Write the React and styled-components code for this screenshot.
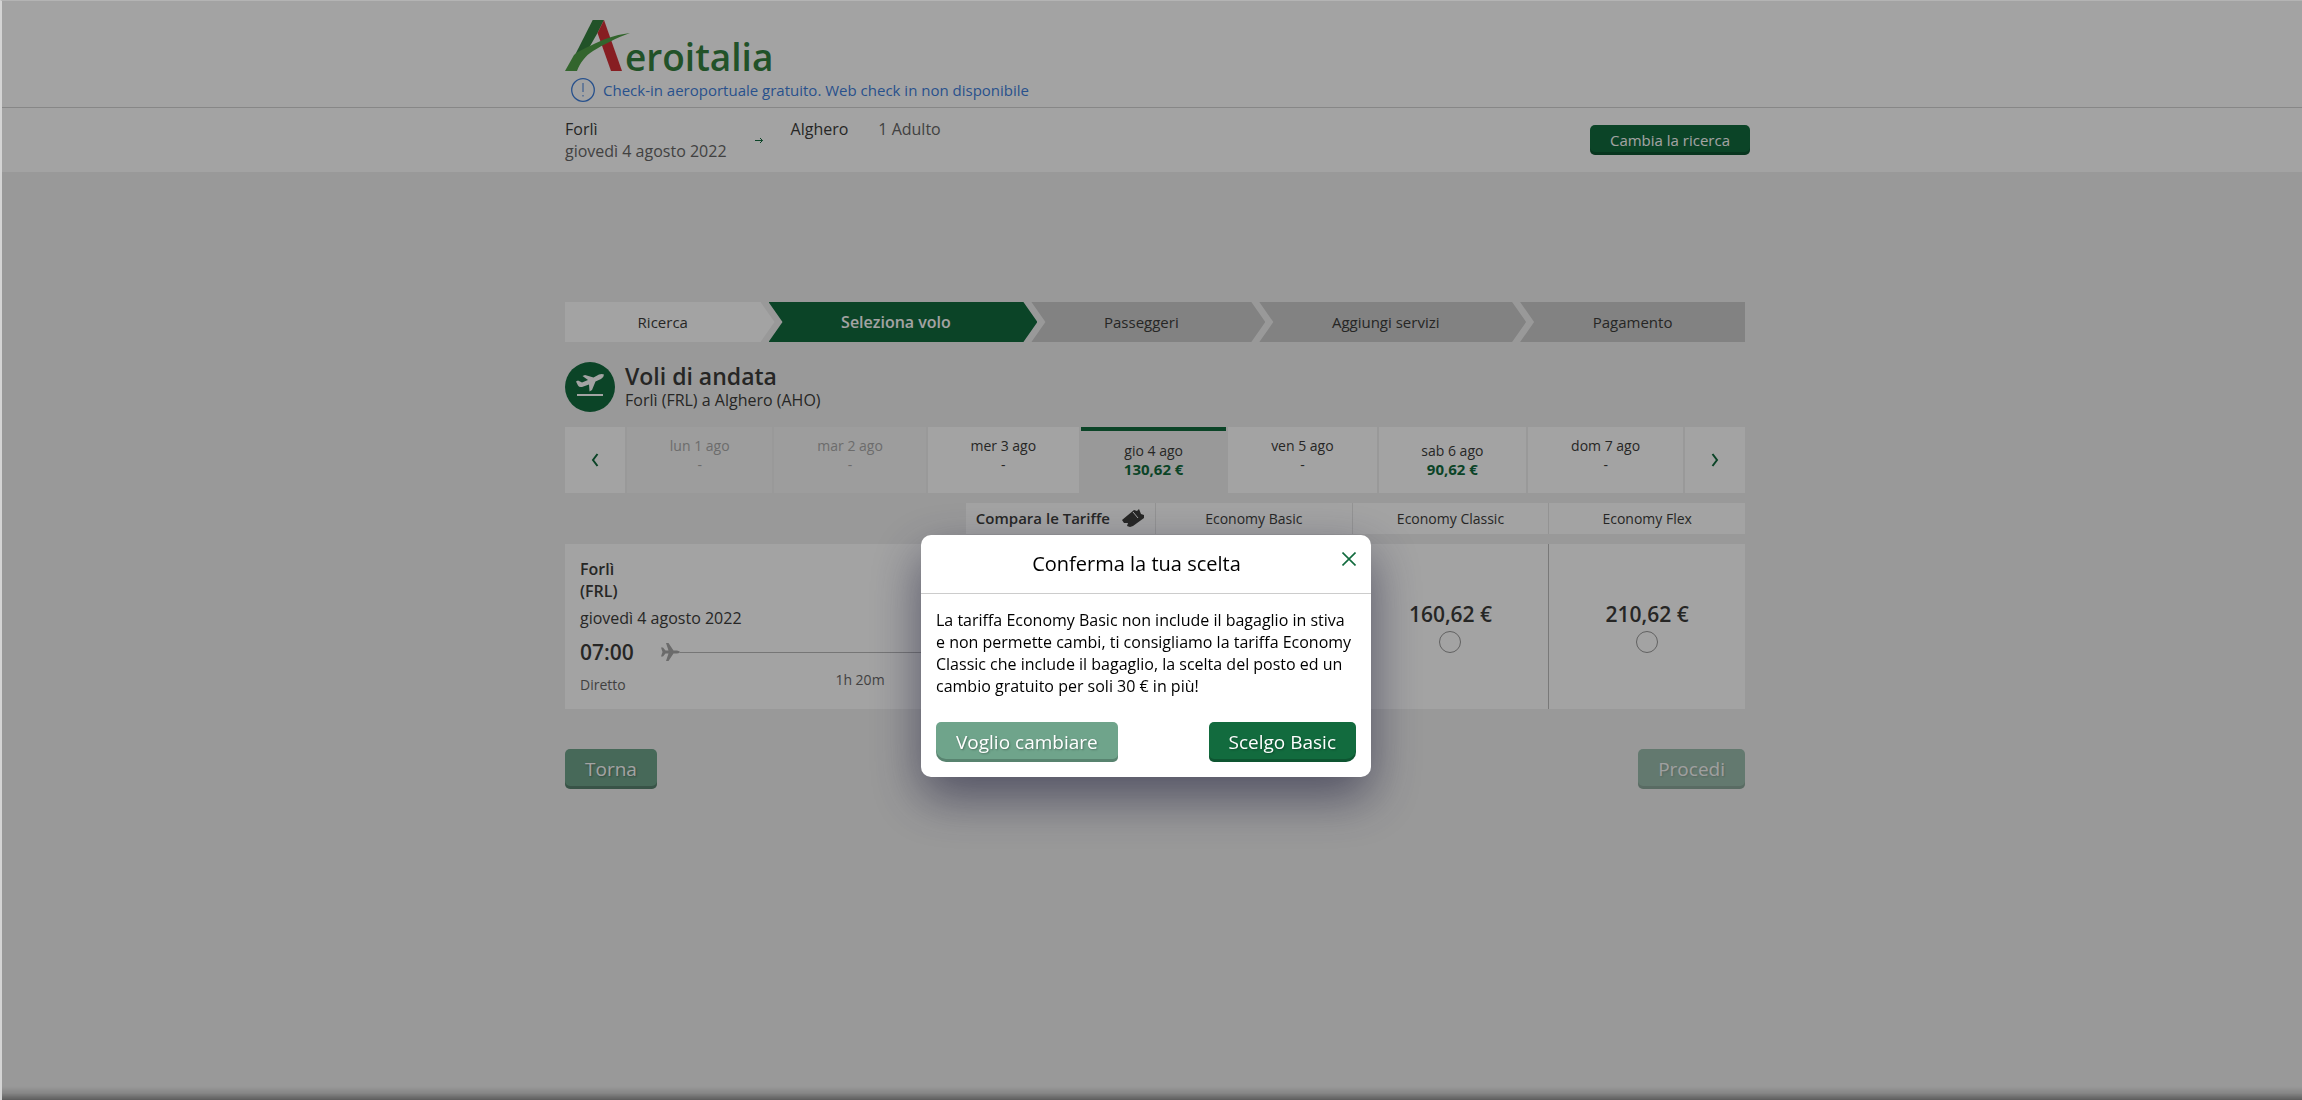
import React from "react";
import styled, { createGlobalStyle, css } from "styled-components";

const green = "#126b3e";
const ink = "#3c3c3a";

const GlobalStyle = createGlobalStyle`
  *, *::before, *::after { box-sizing: border-box; }
  body {
    margin: 0;
    background: #f0f0f0;
    color: ${ink};
    font: 16px/22px "Open Sans", "Noto Sans", sans-serif;
  }
  h1, h2, p, ol { margin: 0; padding: 0; }
  button, input { font-family: inherit; }
`;

const Page = styled.div`
  min-height: 100vh;
  padding-left: 8px;
`;

const Header = styled.header`
  margin-left: -8px;
  padding-left: 8px;
  background: #fff;
`;

const HeaderInner = styled.div`
  max-width: 1190px;
  margin: 0 auto;
  padding-left: 5px;
`;

const Brand = styled(HeaderInner)`
  height: 107px;
  padding-top: 20px;
`;

const Rule = styled.div`
  height: 1px;
  margin-left: -8px;
  background: #d4d4d4;
`;

const LogoSvg = styled.svg`
  display: block;
  overflow: visible;
`;

const Notice = styled.p`
  display: flex;
  align-items: center;
  gap: 8px;
  padding: 6px 6px 0;
  color: #3f7fdc;
  font-size: 15px;
`;

const SearchBar = styled(HeaderInner)`
  display: flex;
  align-items: flex-start;
  height: 64px;
  padding-top: 10px;
`;

const Muted = styled.span`
  color: #676767;
`;

const Place = styled.div`
  display: flex;
  flex-direction: column;
`;

const Arrow = styled.svg`
  margin: 19px 27px 0 28px;
`;

const Passengers = styled(Muted)`
  margin-left: 30px;
`;

const raised = css`
  border: 0;
  border-radius: 5px;
  color: #fff;
  cursor: pointer;
  box-shadow: inset 0 -3px 0 rgba(0, 0, 0, 0.2);
`;

const SmallButton = styled.button`
  ${raised}
  margin: 7px 0 0 auto;
  height: 30px;
  padding: 0 20px 1px;
  background: ${green};
  font-size: 15px;
`;

const Button = styled.button`
  ${raised}
  height: 40px;
  padding: 0 20px 1px;
  font-size: 19px;
  background: ${(p) => (p.$soft ? "#6fa48b" : green)};
  text-shadow: 1px 1px 2px rgba(0, 0, 0, 0.3);
  &:disabled { opacity: 0.65; }
`;

const Main = styled.main`
  max-width: 1180px;
  margin: 130px auto 0;
`;

const Steps = styled.ol`
  display: flex;
  height: 40px;
  list-style: none;
`;

const stepFill = { done: "#fff", current: green, next: "#cbcbcb" };

const Step = styled.li`
  flex: 1 1 auto;
  padding: 0 80px 0 66px;
  text-align: center;
  font-size: 15px;
  line-height: 40px;
  background: ${(p) => stepFill[p.$state]};
  clip-path: polygon(0 0, calc(100% - 14px) 0, 100% 50%, calc(100% - 14px) 100%, 0 100%, 14px 50%);
  & + & { margin-left: -6px; }
  &:first-child {
    clip-path: polygon(0 0, calc(100% - 14px) 0, 100% 50%, calc(100% - 14px) 100%, 0 100%);
  }
  &:last-child {
    padding-right: 66px;
    clip-path: polygon(0 0, 100% 0, 100% 100%, 0 100%, 14px 50%);
  }
  ${(p) => p.$state === "current" && css`
    color: #fff;
    font-size: 16px;
    font-weight: 600;
  `}
`;

const Heading = styled.div`
  display: flex;
  align-items: center;
  gap: 10px;
  margin: 20px 0 15px;
`;

const Badge = styled.span`
  display: grid;
  place-items: center;
  width: 50px;
  height: 50px;
  border-radius: 50%;
  background: ${green};
`;

const Title = styled.h1`
  font-size: 23px;
  line-height: 26px;
  font-weight: 600;
`;

const Days = styled.div`
  display: flex;
  gap: 2px;
  height: 66px;
`;

const DayArrow = styled.button`
  flex: 0 0 60px;
  display: grid;
  place-items: center;
  padding: 0;
  border: 0;
  background: #fff;
  cursor: pointer;
`;

const Day = styled.button`
  flex: 1 1 auto;
  display: flex;
  flex-direction: column;
  align-items: center;
  justify-content: center;
  padding: 0 20px ${(p) => (p.$price ? 0 : 10)}px;
  border: 0;
  background: ${(p) => (p.$selected ? "transparent" : "#fff")};
  box-shadow: ${(p) => (p.$selected ? `inset 0 4px 0 ${green}` : "none")};
  color: ${ink};
  font-size: 14px;
  line-height: 19px;
  cursor: pointer;
  &:disabled { background: #f6f6f6; color: #aaa; }
`;

const Price = styled.span`
  color: ${green};
  font-size: 15px;
  font-weight: 700;
`;

const Columns = styled.div`
  display: grid;
  grid-template-columns: 3fr 1fr 1fr 1fr;
  margin-top: 10px;
`;

const FareHead = styled.div`
  padding: 0 10px;
  background: #fff;
  border-left: ${(p) => (p.$first ? 0 : 1)}px solid #e6e6e6;
  font-size: 14px;
  line-height: 31px;
  text-align: center;
`;

const Compare = styled(FareHead)`
  justify-self: end;
  display: flex;
  align-items: center;
  gap: 12px;
  font-size: 15px;
  font-weight: 600;
`;

const Flight = styled.section`
  display: flex;
  flex-direction: column;
  height: 165px;
  padding: 14px 15px;
  background: #fff;
`;

const Strong = styled.div`
  font-weight: 600;
`;

const FlightDate = styled.div`
  margin-top: 5px;
`;

const Timeline = styled.div`
  display: flex;
  align-items: center;
  margin-top: 10px;
`;

const Time = styled.span`
  font-size: 21px;
  line-height: 26px;
  font-weight: 600;
`;

const Track = styled.div`
  flex: 1;
  display: flex;
  align-items: center;
  margin: 0 80px 0 27px;
  &::after { content: ""; flex: 1; height: 1px; background: #b9b9b9; }
`;

const FlightNotes = styled.div`
  display: grid;
  grid-template-columns: 1fr auto 1fr;
  margin-top: 5px;
  color: #676767;
  font-size: 14px;
  line-height: 19px;
`;

const Direct = styled.span`
  margin-top: 5px;
`;

const Fare = styled.label`
  display: flex;
  flex-direction: column;
  align-items: center;
  justify-content: center;
  background: #fff;
  border-left: 1px solid #bdbdbd;
  font-size: 21px;
  line-height: 26px;
  font-weight: 600;
`;

const Radio = styled.input`
  appearance: none;
  width: 22px;
  height: 22px;
  margin: 4px 0 0;
  border: 1px solid #999;
  border-radius: 50%;
`;

const Footer = styled.div`
  display: flex;
  justify-content: space-between;
  margin-top: 40px;
`;

const Overlay = styled.div`
  position: fixed;
  inset: 0;
  display: flex;
  align-items: flex-start;
  justify-content: center;
  padding: 534px 12px 0 0;
  background: rgba(0, 0, 0, 0.36);
  border-top: 1px solid #b4b4b4;
  border-left: 2px solid #d4d4d4;
  &::after {
    content: "";
    position: absolute;
    inset: auto 0 0;
    height: 14px;
    background: linear-gradient(rgba(0, 0, 0, 0), rgba(0, 0, 0, 0.12) 50%, rgba(0, 0, 0, 0.4));
  }
`;

const Dialog = styled.div`
  width: 450px;
  border-radius: 10px;
  background: #fff;
  color: #000;
  box-shadow: 0 20px 50px rgba(30, 30, 60, 0.6);
`;

const DialogHead = styled.div`
  display: flex;
  align-items: flex-start;
  padding: 15px;
  border-bottom: 1px solid #ccc;
`;

const DialogTitle = styled.h2`
  flex: 1;
  font-size: 20px;
  line-height: 28px;
  font-weight: 400;
  text-align: center;
`;

const Close = styled.button`
  display: grid;
  padding: 2px 0 0 5px;
  border: 0;
  background: none;
  cursor: pointer;
`;

const DialogText = styled.p`
  padding: 15px 15px 25px;
`;

const DialogActions = styled.div`
  display: flex;
  justify-content: space-between;
  padding: 0 15px 15px;
  & > :first-child { border-bottom-left-radius: 10px; }
  & > :last-child { border-bottom-right-radius: 10px; }
`;

function Logo() {
  return (
    <LogoSvg width="210" height="52" viewBox="0 0 210 52" role="img" aria-label="Aeroitalia">
      <path d="M27.700 0H39L32.500 13L24.500 27L10 35Z" fill="#35803f" />
      <path d="M39 0L57 51H46L32.500 13Z" fill="#d32f36" />
      <path d="M0 51L9 35C13 31 19 29 25 26C37 20 48 15 65 13C51 18 38 25 28 31C20 36 15 43 12 51Z" fill="#509f47" />
      <text x="60" y="51" fill="#35803f" fontFamily="Open Sans, sans-serif" fontWeight="600" fontSize="37">eroitalia</text>
    </LogoSvg>
  );
}

const steps = [
  ["Ricerca", "done"],
  ["Seleziona volo", "current"],
  ["Passeggeri", "next"],
  ["Aggiungi servizi", "next"],
  ["Pagamento", "next"],
];

const days = [
  { label: "lun 1 ago", disabled: true },
  { label: "mar 2 ago", disabled: true },
  { label: "mer 3 ago" },
  { label: "gio 4 ago", price: "130,62 €", selected: true },
  { label: "ven 5 ago" },
  { label: "sab 6 ago", price: "90,62 €" },
  { label: "dom 7 ago" },
];

const fareNames = ["Economy Basic", "Economy Classic", "Economy Flex"];
const farePrices = { "Economy Classic": "160,62 €", "Economy Flex": "210,62 €" };

function Chevron({ d }) {
  return (
    <svg width="8" height="14" viewBox="0 0 8 14" fill="none" stroke={green} strokeWidth="2">
      <path d={d} />
    </svg>
  );
}

export default function App() {
  return (
    <>
      <GlobalStyle />
      <Page>
        <Header>
          <Brand>
            <Logo />
            <Notice>
              <svg width="24" height="24" viewBox="0 0 24 24" fill="none" stroke="currentColor">
                <circle cx="12" cy="12" r="11.3" strokeWidth="1.3" />
                <path d="M12 5V14M12 17V18.5" strokeWidth="1" />
              </svg>
              Check-in aeroportuale gratuito. Web check in non disponibile
            </Notice>
          </Brand>
          <Rule />
          <SearchBar>
            <Place>
              <span>Forlì</span>
              <Muted>giovedì 4 agosto 2022</Muted>
            </Place>
            <Arrow width="9" height="7" viewBox="0 0 9 7" fill="none" stroke={green}>
              <path d="M0 3.5H7.500M5 1L7.500 3.500L5 6" />
            </Arrow>
            <span>Alghero</span>
            <Passengers>1 Adulto</Passengers>
            <SmallButton type="button">Cambia la ricerca</SmallButton>
          </SearchBar>
        </Header>

        <Main>
          <Steps>
            {steps.map(([label, state]) => (
              <Step key={label} $state={state}>{label}</Step>
            ))}
          </Steps>

          <Heading>
            <Badge>
              <svg width="28" height="28" viewBox="0 0 28 28" fill="#fff">
                <path d="M1 21H27V23H1Z" />
                <path d="M0 8.500L2 7.500L6 9.500L12 7L6.500 3L9 2L17.500 4.500L23 1.500Q26 0.500 28 1.500Q28 4 25 6L19.500 8.500L16 17L13.500 18.500L13 11.500L6 14Q3 14.500 2 12.500Z" />
              </svg>
            </Badge>
            <div>
              <Title>Voli di andata</Title>
              <div>Forlì (FRL) a Alghero (AHO)</div>
            </div>
          </Heading>

          <Days>
            <DayArrow type="button" aria-label="Giorni precedenti"><Chevron d="M6.500 1L2 7L6.500 13" /></DayArrow>
            {days.map((d) => (
              <Day key={d.label} type="button" disabled={d.disabled} $price={d.price} $selected={d.selected}>
                <span>{d.label}</span>
                {d.price ? <Price>{d.price}</Price> : <span>-</span>}
              </Day>
            ))}
            <DayArrow type="button" aria-label="Giorni successivi"><Chevron d="M1.500 1L6 7L1.500 13" /></DayArrow>
          </Days>

          <Columns>
            <Compare $first>
              Compara le Tariffe
              <svg width="23" height="19" viewBox="0 0 23 19" fill={ink}>
                <path d="M0 11L12 1L15 2L17 0L19 5L22 6L22 9L11 17L8 18L5 17L6 14L2 14Z" />
                <path d="M11 3L16 9" stroke="#fff" />
              </svg>
            </Compare>
            {fareNames.map((name) => <FareHead key={name}>{name}</FareHead>)}
          </Columns>

          <Columns>
            <Flight>
              <Strong>Forlì</Strong>
              <Strong>(FRL)</Strong>
              <FlightDate>giovedì 4 agosto 2022</FlightDate>
              <Timeline>
                <Time>07:00</Time>
                <Track>
                  <svg width="19" height="18" viewBox="0 0 19 18" fill="#a8a8a8">
                    <path d="M0 4.500H2L4.500 7.500H7.500L5 0H7.500L12.500 7.500H16Q19 8 19 9Q19 10 16 10.500H12.500L7.500 18H5L7.500 10.500H4.500L2 13.500H0L1.500 9Z" />
                  </svg>
                </Track>
              </Timeline>
              <FlightNotes>
                <Direct>Diretto</Direct>
                <span>1h 20m</span>
              </FlightNotes>
            </Flight>
            {fareNames.map((name) => (
              <Fare key={name}>
                {farePrices[name]}
                <Radio type="radio" name="fare" aria-label={name} />
              </Fare>
            ))}
          </Columns>

          <Footer>
            <Button type="button" $soft>Torna</Button>
            <Button type="button" $soft disabled>Procedi</Button>
          </Footer>
        </Main>
      </Page>

      <Overlay>
        <Dialog role="dialog" aria-modal="true" aria-labelledby="dialog-title">
          <DialogHead>
            <DialogTitle id="dialog-title">Conferma la tua scelta</DialogTitle>
            <Close type="button" aria-label="Chiudi">
              <svg width="14" height="14" viewBox="0 0 14 14" fill="none" stroke={green} strokeWidth="1.6">
                <path d="M0.500 0.500L13.500 13.500M13.500 0.500L0.500 13.500" />
              </svg>
            </Close>
          </DialogHead>
          <DialogText>
            La tariffa Economy Basic non include il bagaglio in stiva e non permette cambi, ti consigliamo la
            tariffa Economy Classic che include il bagaglio, la scelta del posto ed un cambio gratuito per soli
            30 € in più!
          </DialogText>
          <DialogActions>
            <Button type="button" $soft>Voglio cambiare</Button>
            <Button type="button">Scelgo Basic</Button>
          </DialogActions>
        </Dialog>
      </Overlay>
    </>
  );
}
